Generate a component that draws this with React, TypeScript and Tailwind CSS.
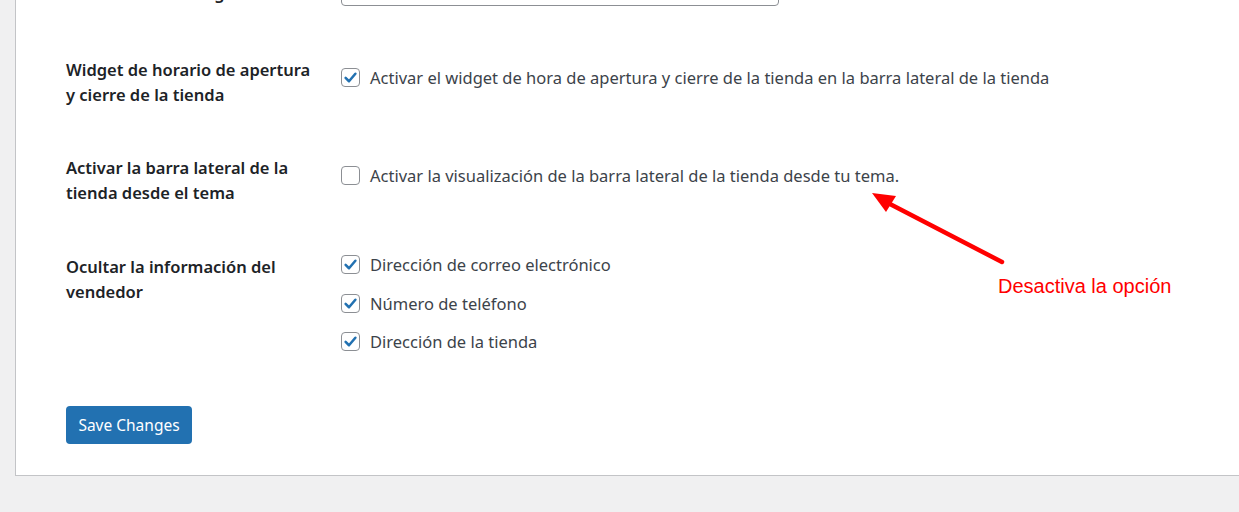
import React from 'react';

const Check: React.FC<{ checked?: boolean }> = ({ checked }) => (
  <span className="w-[19px] h-[19px] shrink-0 rounded-[4px] border border-[#8c8f94] bg-white flex items-center justify-center">
    {checked && (
      <svg width="15" height="15" viewBox="0 0 20 20" fill="none">
        <path d="M3.5 10.5 L8 15 L16.5 5" stroke="#2271b1" strokeWidth="3.4" strokeLinecap="round" strokeLinejoin="round" />
      </svg>
    )}
  </span>
);

const Option: React.FC<{ checked?: boolean; text: string }> = ({ checked, text }) => (
  <label className="flex items-center gap-[10px] h-[25px] text-[#3c434a]">
    <Check checked={checked} />
    <span>{text}</span>
  </label>
);

export default function App() {
  return (
    <div className="min-h-[512px] bg-[#f0f0f1] text-[16.5px] leading-[25px]" style={{ fontFamily: '"Noto Sans", "Open Sans", sans-serif' }}>
      <div className="relative ml-[15px] h-[476px] border-l border-b border-[#c3c4c7] bg-white overflow-hidden">
        <div className="pl-[50px]">
          {/* cut-off row above */}
          <div className="flex items-start -mt-[34px]">
            <div className="w-[275px] pt-[14px] font-semibold text-[#1d2327]">Nombre del catálogo</div>
            <div className="w-[438px] h-[40px] rounded-[4px] border border-[#8c8f94] bg-white" />
          </div>

          {/* Widget row */}
          <div className="flex items-start mt-[51px]">
            <div className="w-[275px] pr-[20px] font-semibold text-[#1d2327]">
              Widget de horario de apertura<br />y cierre de la tienda
            </div>
            <div className="pt-[8px]">
              <Option checked text="Activar el widget de hora de apertura y cierre de la tienda en la barra lateral de la tienda" />
            </div>
          </div>

          {/* Sidebar row */}
          <div className="flex items-start mt-[48px]">
            <div className="w-[275px] pr-[20px] font-semibold text-[#1d2327]">
              Activar la barra lateral de la<br />tienda desde el tema
            </div>
            <div className="pt-[8px]">
              <Option text="Activar la visualización de la barra lateral de la tienda desde tu tema." />
            </div>
          </div>

          {/* Vendor info row */}
          <div className="flex items-start mt-[49px]">
            <div className="w-[275px] pr-[20px] font-semibold text-[#1d2327]">
              Ocultar la información del<br />vendedor
            </div>
            <div className="-mt-[2px] flex flex-col gap-[13.5px]">
              <Option checked text="Dirección de correo electrónico" />
              <Option checked text="Número de teléfono" />
              <Option checked text="Dirección de la tienda" />
            </div>
          </div>

          <button className="mt-[52px] h-[38px] w-[126px] rounded-[4px] bg-[#2271b1] text-white text-[15.5px]">
            Save Changes
          </button>
        </div>

        {/* annotation */}
        <svg className="absolute left-0 top-0 pointer-events-none" width="1224" height="475">
          <g transform="translate(-16 0)">
            <line x1="1002" y1="262" x2="888" y2="203" stroke="#ff0000" strokeWidth="4.5" strokeLinecap="round" />
            <polygon points="872,193 896,196 886,212" fill="#ff0000" />
          </g>
        </svg>
        <div
          className="absolute left-[982px] top-[273px] text-[#ff0000] text-[20px] leading-[26px]"
          style={{ fontFamily: '"Liberation Sans", Arial, sans-serif' }}
        >
          Desactiva la opción
        </div>
      </div>
    </div>
  );
}
